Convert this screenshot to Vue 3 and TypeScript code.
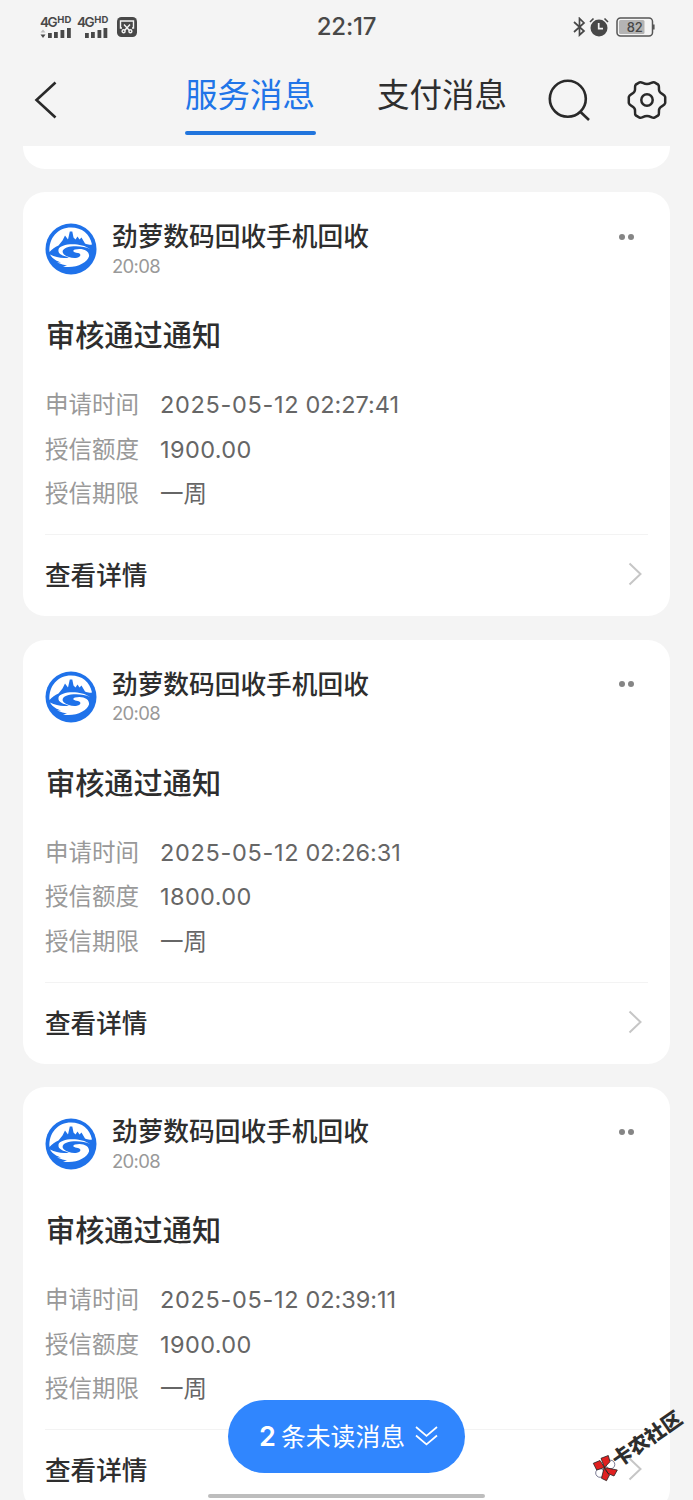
<script setup lang="ts">
interface Message {
  id: number
  date: string
  clock: string
  amount: string
  period: string
}

const sender = '劲萝数码回收手机回收'
const messages: Message[] = [
  { id: 1, date: '2025-05-12', clock: '02:27:41', amount: '1900.00', period: '一周' },
  { id: 2, date: '2025-05-12', clock: '02:26:31', amount: '1800.00', period: '一周' },
  { id: 3, date: '2025-05-12', clock: '02:39:11', amount: '1900.00', period: '一周' },
]
</script>

<template>
  <div class="screen">
    <header class="status">
      <div class="status-left">
        <div class="signal">
          <div class="net"><span>4G</span><small>HD</small></div>
          <svg class="bars" width="32" height="11" viewBox="0 0 32 11">
            <path d="M0.500 4.500 L3 1.500 L5.500 4.500 Z" fill="#bbb" />
            <path d="M0.500 6.500 H5.500 L3 10 Z" />
            <path d="M8 5h3.800v5h-3.800z M14 4h3.800v6h-3.800z M20.500 2h3.800v8h-3.800z M27 0h3.800v10h-3.800z" />
          </svg>
        </div>
        <div class="signal">
          <div class="net"><span>4G</span><small>HD</small></div>
          <svg class="bars" width="32" height="11" viewBox="0 0 32 11">
            <path d="M8 5h3.800v5h-3.800z M14 4h3.800v6h-3.800z M20.500 2h3.800v8h-3.800z M26.500 0h3.800v10h-3.800z" />
          </svg>
        </div>
        <svg class="snip" width="20" height="20" viewBox="0 0 20 20">
          <rect width="20" height="20" rx="4.500" fill="#484848" />
          <g fill="none" stroke="#f4f4f4" stroke-width="1.400">
            <path d="M5 11H3.500V4H16.500V11H15" />
            <path d="M7 7.500L12.200 13.300M13 7.500L7.800 13.300" />
            <circle cx="6.600" cy="14.300" r="1.500" />
            <circle cx="13.400" cy="14.300" r="1.500" />
          </g>
        </svg>
      </div>
      <div class="clock">22:17</div>
      <div class="status-right">
        <svg width="13" height="20" viewBox="0 0 13 20" fill="none" stroke="#484848" stroke-width="1.700">
          <path d="M1 5L11 14L6.500 18V1.500L11 6L1 15" />
        </svg>
        <svg width="20" height="20" viewBox="0 0 20 20">
          <circle cx="10" cy="11" r="8.500" fill="#484848" />
          <path d="M1 5L4.500 1.500M19 5L15.500 1.500" stroke="#484848" stroke-width="1.600" />
          <path d="M9.700 6V11.700H14" fill="none" stroke="#f4f4f4" stroke-width="1.700" />
        </svg>
        <svg class="battery" width="39" height="20" viewBox="0 0 39 20">
          <rect x="1" y="1" width="35.500" height="18" rx="3.500" fill="#f4f4f4" stroke="#555" stroke-width="1.500" />
          <rect x="3" y="3" width="25.500" height="14" rx="1.500" fill="#b4b4b4" />
          <path d="M37.800 7.500V12.500" stroke="#555" stroke-width="1.600" />
          <text x="18.800" y="14.700" text-anchor="middle">82</text>
        </svg>
      </div>
    </header>

    <nav class="topbar">
      <svg class="back" width="24" height="38" viewBox="0 0 24 38">
        <path d="M22.500 1.500L3.500 19L22.500 36.500" fill="none" stroke="#292929" stroke-width="2.600" />
      </svg>
      <div class="tab active">服务消息</div>
      <div class="tab">支付消息</div>
      <svg class="search" width="44" height="44" viewBox="0 0 44 44" fill="none" stroke="#292929" stroke-width="2.600">
        <circle cx="20.800" cy="20.800" r="18" />
        <path d="M33 33.500L42 42" />
      </svg>
      <svg class="gear" width="40" height="40" viewBox="0 0 40 40" fill="none" stroke="#292929" stroke-width="2.500">
        <path d="M12.500 2.400 C15 1.500 16 4 20 4 C24 4 25 1.500 27.500 2.400 L31.200 4.600 C33 6.500 31 9 32.500 11.500 C34.200 14.500 37.500 14 38.200 17 V23 C37.500 26 34.200 25.500 32.500 28.500 C31 31 33 33.500 31.200 35.400 L27.500 37.600 C25 38.500 24 36 20 36 C16 36 15 38.500 12.500 37.600 L8.800 35.400 C7 33.500 9 31 7.500 28.500 C5.800 25.500 2.500 26 1.800 23 V17 C2.500 14 5.800 14.500 7.500 11.500 C9 9 7 6.500 8.800 4.600 Z" />
        <circle cx="20" cy="20" r="5.700" />
      </svg>
    </nav>

    <main class="list">
      <div class="previous"></div>
      <article v-for="m in messages" :key="m.id" class="card">
        <div class="head">
          <svg class="avatar" width="52" height="52" viewBox="0 0 52 52">
            <circle cx="26" cy="26" r="25.500" fill="#1f72ea" />
            <path d="M4.500 29 C3.500 15 13 4.500 26 4.500 C37 4.500 45 11 47 21.500 C44 22 42 21.500 40 20.500 L36.500 14.500 L34.500 16.500 L32.500 13.500 L30.500 16.500 L28.500 14.500 L27.300 8.500 L24.800 8.500 L23 16.500 L20 12.500 L17.500 17.500 L13.500 22.500 C10 24 7 26 4.500 29 Z" fill="#fff" />
            <path d="M45 26 C36 19 15 20 13.500 26.500 C12.500 31.500 19 33 24 34.500 C18 36 11 34.500 5 31.500 C8 36.500 12 38 16 39.500 L12 39.500 C16 41 19 42 22 42.500 L18 43.500 C30 46 42 40 44 33.500 C45 27.500 37 24.500 30 26.500 C26.500 28 29 29.500 33 30 C36.500 30.800 36.500 34 31 35 C27 35.500 22 34 19 31.500 C15.500 28 19 24.500 26 23.500 C33 22.700 40 23.500 45 26 Z" fill="#fff" />
          </svg>
          <div class="who">
            <div class="name">{{ sender }}</div>
            <div class="time">20:08</div>
          </div>
          <div class="more"><i></i><i></i></div>
        </div>
        <h2 class="title">审核通过通知</h2>
        <dl class="rows">
          <div class="row"><dt>申请时间</dt><dd><span class="date">{{ m.date }}</span> <span class="hms">{{ m.clock }}</span></dd></div>
          <div class="row"><dt>授信额度</dt><dd class="amount">{{ m.amount }}</dd></div>
          <div class="row"><dt>授信期限</dt><dd>{{ m.period }}</dd></div>
        </dl>
        <div class="foot">
          <span>查看详情</span>
          <svg width="15" height="24" viewBox="0 0 15 24">
            <path d="M1.500 1.500L12.500 12L1.500 22.500" fill="none" stroke="#c6c6c6" stroke-width="2" />
          </svg>
        </div>
      </article>
    </main>

    <div class="unread">
      <b>2</b><span>条未读消息</span>
      <svg width="23" height="22" viewBox="0 0 23 22" fill="none" stroke="#fff" stroke-width="1.700">
        <path d="M1 2L11.500 11L22 2M1 10.500L11.500 19.500L22 10.500" />
      </svg>
    </div>
    <div class="home-bar"></div>

    <svg class="mark-logo" width="28" height="28" viewBox="0 0 28 28">
      <circle cx="8" cy="18" r="4.300" fill="#fff" stroke="#446" stroke-width="0.700" />
      <circle cx="18.500" cy="9.500" r="4.300" fill="#fff" stroke="#446" stroke-width="0.700" />
      <path d="M1.300 8.300L8 5.500L12.500 12.500L4.700 15Z M9 3.300L16.300 0.500L18 6.700L12.500 12.500Z M12.500 12.500L25.300 15L22 21L16 18.500Z M12 13L17.500 20L14.500 25.700L9.500 23.300Z" fill="#e02020" stroke="#222" stroke-width="0.800" />
    </svg>
    <div class="watermark">卡农社区</div>
  </div>
</template>

<style>
body {
  margin: 0;
  background: #f4f4f4;
}
</style>

<style scoped>
.screen {
  position: relative;
  width: 693px;
  height: 1500px;
  overflow: hidden;
  background: #f4f4f4;
  color: #2e2e2e;
  font-family: Inter, "Noto Sans CJK SC", sans-serif;
}
.screen svg { display: block; flex: none; }
.status {
  display: grid;
  grid-template-columns: 1fr auto 1fr;
  height: 54px;
  align-items: center;
  padding: 0 38px 0 40px;
}
.status-left, .status-right { display: flex; align-items: center; }
.status-left { gap: 5px; }
.signal { width: 32px; height: 23px; }
.net {
  display: flex;
  align-items: flex-start;
  height: 12px;
  line-height: 12px;
  font-size: 13.500px;
  font-weight: 600;
  letter-spacing: -1.400px;
  color: #484848;
  white-space: nowrap;
}
.net small {
  font-size: 9.500px;
  line-height: 8px;
  font-weight: 700;
  letter-spacing: 0;
  margin-left: 1px;
}
.bars { fill: #484848; }
.snip { margin-left: 3px; }
.clock {
  font-size: 24px;
  letter-spacing: -0.200px;
  margin-right: 2px;
  font-weight: 500;
  color: #484848;
  line-height: 54px;
}
.status-right { justify-content: flex-end; gap: 3px; }
.battery { margin-left: 4px; }
.battery text { font: 500 13px Inter, sans-serif; fill: #484848; }
.topbar {
  display: flex;
  align-items: flex-start;
  height: 92px;
  padding-left: 33px;
}
.back { margin: 27px 128px 0 0; }
.tab {
  width: 131px;
  height: 77px;
  margin-right: 61px;
  font-size: 32.500px;
  line-height: 84px;
  white-space: nowrap;
}
.tab.active { color: #2175e8; position: relative; }
.tab.active::after {
  content: "";
  position: absolute;
  left: 0;
  top: 77px;
  width: 131px;
  height: 4px;
  border-radius: 2px;
  background: #2175dd;
}
.search { margin: 24px 0 0 -22px; }
.gear { margin: 26px 0 0 36px; }
.list { padding: 0 23px; }
.previous {
  height: 23px;
  border-radius: 0 0 22px 22px;
  background: #fff;
  margin-bottom: 23.300px;
}
.card {
  box-sizing: border-box;
  height: 424px;
  margin-bottom: 23.400px;
  padding: 28px 22px 0;
  border-radius: 22px;
  background: #fff;
}
.head { display: flex; height: 76px; }
.avatar { margin-top: 3px; }
.who { margin-left: 15px; flex: 1; }
.name {
  font-size: 25.700px;
  font-weight: 500;
  line-height: 34.500px;
  white-space: nowrap;
}
.time {
  font-size: 18.500px;
  letter-spacing: -0.700px;
  line-height: 23.500px;
  color: #999;
}
.more { display: flex; gap: 3.500px; margin: 13.500px 14px 0 0; }
.more i { width: 6px; height: 6px; border-radius: 50%; background: #858585; }
.title {
  margin: 18px 0 0 1px;
  font-size: 29.200px;
  line-height: 43px;
  font-weight: 500;
}
.rows { margin: 26.200px 0 0; }
.row {
  display: flex;
  height: 44.500px;
  line-height: 44.500px;
  font-size: 23.500px;
}
dt { width: 115px; color: #999; }
dd { margin: 0; color: #666; word-spacing: -0.500px; }
.date { letter-spacing: 0.700px; }
.hms { letter-spacing: -0.050px; }
.amount { letter-spacing: 0.400px; }
.foot {
  display: flex;
  justify-content: space-between;
  align-items: center;
  height: 78px;
  margin-top: 17.500px;
  padding-right: 5px;
  border-top: 1px solid #f3f3f3;
  font-size: 25.600px;
  font-weight: 500;
}
.foot span { margin-top: -1px; }
.unread {
  position: absolute;
  left: 228px;
  top: 1400px;
  width: 237px;
  height: 73px;
  box-sizing: border-box;
  display: flex;
  align-items: center;
  padding-left: 31px;
  border-radius: 37px;
  background: #3086fe;
  color: #fff;
  font-size: 24.800px;
}
.unread span { margin-top: -3px; }
.unread b { width: 22px; font-weight: 600; font-size: 27px; }
.unread svg { margin: -1px 0 0 10px; }
.home-bar {
  position: absolute;
  left: 208px;
  top: 1494px;
  width: 277px;
  height: 4px;
  border-radius: 2px;
  background: #bdbdbd;
}
.mark-logo {
  position: absolute;
  left: 592px;
  top: 1455px;
}
.watermark {
  position: absolute;
  left: 607px;
  top: 1425px;
  width: 80px;
  line-height: 28px;
  transform: rotate(-35deg);
  font-size: 20px;
  font-weight: 900;
  white-space: nowrap;
}
</style>
